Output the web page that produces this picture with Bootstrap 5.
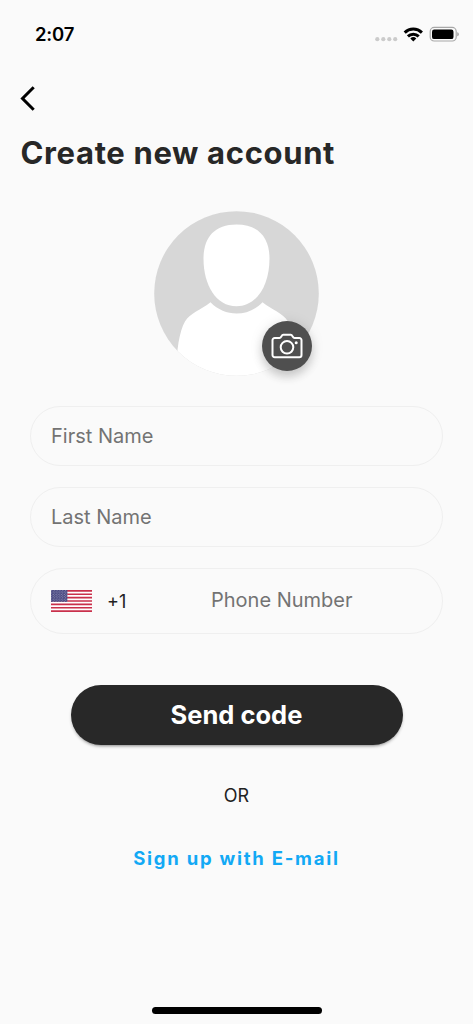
<!DOCTYPE html>
<html lang="en">
<head>
<meta charset="utf-8">
<meta name="viewport" content="width=device-width, initial-scale=1">
<title>Create new account</title>
<link rel="stylesheet" href="https://cdn.jsdelivr.net/npm/bootstrap@5.3.0/dist/css/bootstrap.min.css">
<style>
  body { font-family: Inter, "Liberation Sans", sans-serif; background: #fafafa; color: #000; }
  svg { display: block; }
  .screen { height: 1024px; overflow: hidden; }
  .status { height: 70px; padding: 0 14px 0 35px; }
  .clock { font-size: 18.5px; font-weight: 600; letter-spacing: -.2px; line-height: 24px; padding-bottom: 2px; }
  .back { margin: 15px 0 0 20px; width: 28px; height: 28px; }
  .title { font-size: 31px; font-weight: 650; line-height: 40px; letter-spacing: .65px; margin: 20px 0 0 20.5px; color: #272727; white-space: nowrap; }
  .avatar { width: 165px; height: 165px; margin-top: 38px; }
  .camera { right: 7px; bottom: 5px; width: 50.5px; height: 50.5px; background: #4f4f4f; box-shadow: 0 6px 10px rgba(0,0,0,.16), 0 1px 14px rgba(0,0,0,.1); }
  .fields { margin: 30px 30px 0; gap: 21px; }
  .field { height: 60px; padding: 0 20px; border: 1px solid #efefef; border-radius: 30px; }
  .field-phone { height: 66px; border-radius: 33px; }
  .field .form-control { font-size: 20px; line-height: 24px; letter-spacing: 0; color: #222; }
  .field-phone .form-control { padding-bottom: 2px !important; }
  .field .form-control::placeholder { color: #737373; opacity: 1; }
  .dial { font-size: 18px; width: 104px; margin-left: 15px; color: #222; }
  .send { width: 332px; height: 60px; margin-top: 51px; background: #282828; color: #fff; font-size: 25.5px; font-weight: 650; letter-spacing: 0; box-shadow: 0 3px 2px -2px rgba(0,0,0,.2), 0 2px 3px rgba(0,0,0,.2); }
  .send:hover { background: #282828; color: #fff; }
  .or { font-size: 18px; line-height: 24px; margin-top: 39px; color: #222; }
  .email { font-size: 18.5px; font-weight: 700; line-height: 24px; letter-spacing: 1.75px; margin-top: 38px; color: #12a9f5; }
  .home-bar { width: 170px; height: 7px; background: #000; margin-bottom: 10px; }
</style>
</head>
<body>
<main class="screen d-flex flex-column">
  <div class="status d-flex align-items-center justify-content-between">
    <span class="clock">2:07</span>
    <svg width="84" height="20" viewBox="375 25 84 20">
      <g fill="#cbcbcb"><circle cx="377.3" cy="39.2" r="2.1"/><circle cx="383.3" cy="39.2" r="2.1"/><circle cx="389.3" cy="39.2" r="2.1"/><circle cx="395.2" cy="39.2" r="2.1"/></g>
      <g fill="none" stroke="#000" stroke-width="3"><path d="M404.7 32.600a12.3 12.3 0 0 1 17.2 0"/><path d="M407.9 36.300a7.8 7.8 0 0 1 10.8 0"/></g>
      <path d="M413.3 41.400l-3-3a4.3 4.3 0 0 1 6 0z"/>
      <rect x="430.2" y="27.4" width="26" height="13.6" rx="4" fill="#fafafa" stroke="#a8a8a8" stroke-width="1.2"/>
      <rect x="432" y="29.5" width="21.5" height="9.6" rx="2.2"/>
      <path d="M457.3 32.2c2 .8 2 3.3 0 4.1z" fill="#999"/>
    </svg>
  </div>
  <svg class="back" viewBox="0 0 28 28" fill="none" stroke="#000" stroke-width="3" role="img" aria-label="Back"><path d="M13.7 2.3L2.5 13.5l11.2 11.2"/></svg>
  <h1 class="title">Create new account</h1>

  <div class="avatar position-relative mx-auto">
    <svg width="165" height="165" viewBox="0 0 165 165">
      <defs><clipPath id="disc"><circle cx="82.5" cy="82.5" r="82.3"/></clipPath></defs>
      <g clip-path="url(#disc)">
        <rect width="165" height="165" fill="#d7d7d7"/>
        <path fill="#fff" d="M82.5 13.5C60 13.5 49.5 27 49.5 47.500C49.500 74 62 95.300 82.500 95.300S115.500 74 115.500 47.500C115.500 27 105 13.500 82.500 13.500Z"/>
        <path fill="#fff" d="M22 170C22 141 25 121 31 110.500C36 102 47 99 56.500 91.300C71 106.300 94 106.300 108.500 91.300C118 99 129 102 134 110.500C140 121 143 141 143 170Z"/>
      </g>
    </svg>
    <div class="camera position-absolute rounded-circle d-flex align-items-center justify-content-center">
      <svg width="32" height="26" viewBox="0 0 32 26" fill="none" stroke="#fff" stroke-width="2" stroke-linejoin="round">
        <path d="M3.700 5H8.500C10.500 5 10.200 1.800 12.300 1.800H19.700C21.800 1.800 21.500 5 23.500 5H28.300A2.200 2.200 0 0 1 30.500 7.200V22A2.200 2.200 0 0 1 28.300 24.200H3.700A2.200 2.200 0 0 1 1.500 22V7.200A2.200 2.200 0 0 1 3.700 5Z"/>
        <circle cx="16" cy="14.300" r="6.300"/>
        <circle cx="25.200" cy="9.700" r="1.500" fill="#fff" stroke="none"/>
      </svg>
    </div>
  </div>

  <form class="fields d-flex flex-column">
    <div class="field d-flex align-items-center"><input class="form-control border-0 bg-transparent p-0" type="text" placeholder="First Name"></div>
    <div class="field d-flex align-items-center"><input class="form-control border-0 bg-transparent p-0" type="text" placeholder="Last Name"></div>
    <div class="field field-phone d-flex align-items-center">
      <svg class="flex-shrink-0" width="41" height="22" viewBox="0 0 41 22">
        <defs><pattern id="stars" width="2.800" height="2.400" patternUnits="userSpaceOnUse"><rect width="2.800" height="2.400" fill="#46467f"/><circle cx=".7" cy=".6" r=".5" fill="#b9b9d2"/><circle cx="2.100" cy="1.800" r=".5" fill="#b9b9d2"/></pattern></defs>
        <rect width="41" height="22" fill="#fff"/>
        <path stroke="#c9304b" stroke-width="1.692" d="M0 .846H41M0 4.231H41M0 7.615H41M0 11H41M0 14.385H41M0 17.769H41M0 21.154H41"/>
        <rect width="16.400" height="11.846" fill="url(#stars)"/>
      </svg>
      <span class="dial flex-shrink-0">+1</span>
      <input class="form-control border-0 bg-transparent p-0" type="tel" placeholder="Phone Number">
    </div>
  </form>

  <button class="send btn border-0 rounded-pill p-0 mx-auto" type="button">Send code</button>
  <div class="or text-center">OR</div>
  <a class="email text-center text-decoration-none" href="#">Sign up with E-mail</a>
  <div class="home-bar rounded-pill mx-auto mt-auto"></div>
</main>
<script src="https://cdn.jsdelivr.net/npm/bootstrap@5.3.0/dist/js/bootstrap.bundle.min.js"></script>
</body>
</html>
